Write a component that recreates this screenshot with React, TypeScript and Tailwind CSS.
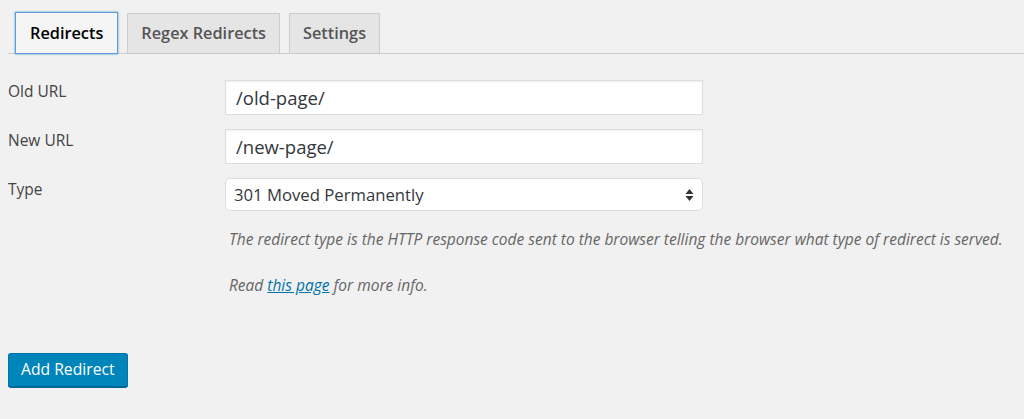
export default function App() {
  return (
    <div className="min-h-[419px] w-[1024px] bg-[#f1f1f1] font-['Open_Sans',sans-serif] text-[#444]">
      <nav className="flex items-end gap-[9px] border-b border-[#ccc] ml-2 pl-[7px] pt-3 h-[54px]">
        <div className="h-[42px] px-[14px] flex items-center border border-[#5b9dd9] bg-[#f5f5f5] shadow-[0_0_2px_rgba(30,140,190,0.8)] text-[16.3px] font-semibold text-[#000] -mb-px">
          Redirects
        </div>
        <div className="h-[40px] px-[13px] flex items-center border border-[#ccc] border-b-0 bg-[#e5e5e5] text-[16.3px] font-semibold text-[#555]">
          Regex Redirects
        </div>
        <div className="h-[40px] px-[13px] flex items-center border border-[#ccc] border-b-0 bg-[#e5e5e5] text-[16.3px] font-semibold text-[#555]">
          Settings
        </div>
      </nav>

      <div className="pl-2 pt-[26px]">
        <div className="grid grid-cols-[217px_478px] gap-y-[14px]">
          <label className="text-[15.5px] pt-[1px] leading-[20px]">Old URL</label>
          <div className="h-[35px] border border-[#ddd] bg-white shadow-[inset_0_1px_2px_rgba(0,0,0,0.07)] px-[10px] flex items-center text-[18.5px] text-[#32373c]">
            /old-page/
          </div>
          <label className="text-[15.5px] pt-[1px] leading-[20px]">New URL</label>
          <div className="h-[35px] border border-[#ddd] bg-white shadow-[inset_0_1px_2px_rgba(0,0,0,0.07)] px-[10px] flex items-center text-[18.5px] text-[#32373c]">
            /new-page/
          </div>
          <label className="text-[15.5px] pt-[1px] leading-[20px]">Type</label>
          <div className="h-[33px] border border-[#ddd] bg-white rounded-[5px] pl-[8px] pr-[8px] flex items-center justify-between text-[16.7px] text-[#32373c]">
            <span>301 Moved Permanently</span>
            <svg width="9" height="14" viewBox="0 0 9 14">
              <path d="M4.5 1 L8.5 6 H0.5 Z" fill="#333" />
              <path d="M4.5 13 L8.5 8 H0.5 Z" fill="#333" />
            </svg>
          </div>
        </div>

        <div className="ml-[221px] mt-[17px] text-[15.5px] italic text-[#666] leading-[22px]">
          <p>The redirect type is the HTTP response code sent to the browser telling the browser what type of redirect is served.</p>
          <p className="mt-[24px]">
            Read <a className="text-[#0073aa] underline">this page</a> for more info.
          </p>
        </div>

        <button className="mt-[57px] h-[34px] px-[12px] bg-[#0085ba] border border-[#0073aa] border-b-[#006799] rounded-[3px] shadow-[0_1px_0_#006799] text-white text-[15.7px]">
          Add Redirect
        </button>
      </div>
    </div>
  );
}
